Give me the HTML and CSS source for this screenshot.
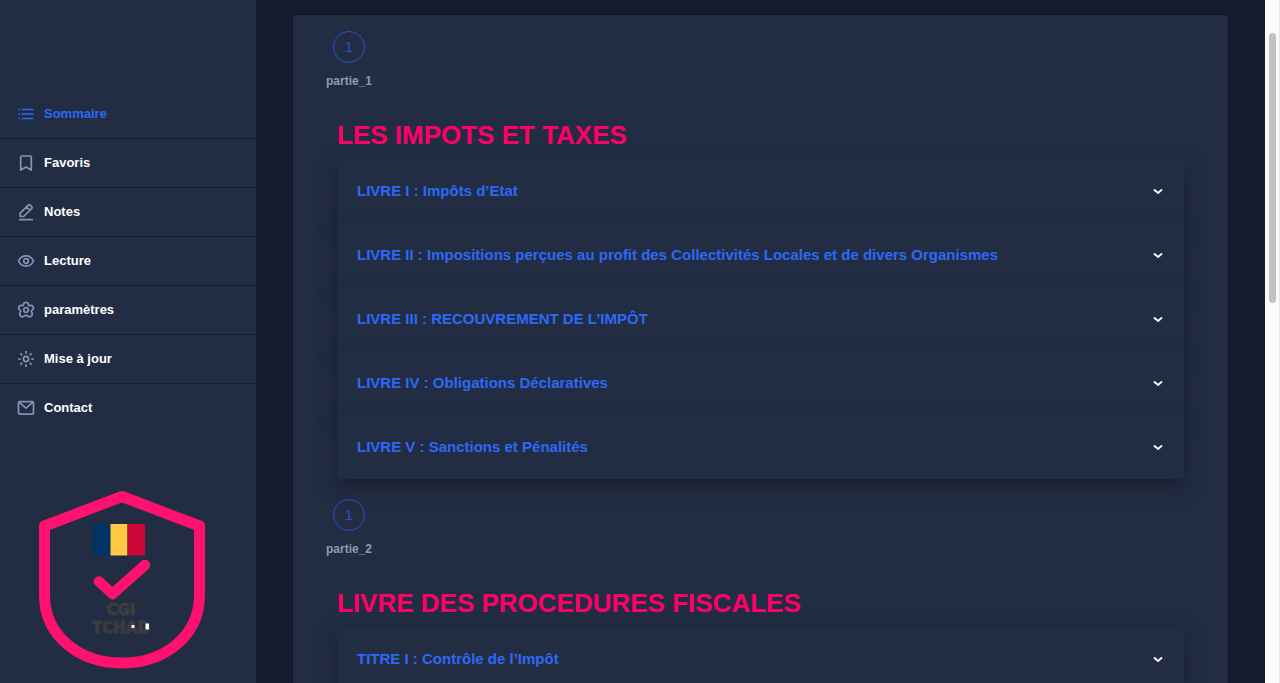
FILE: index.html
```html
<!DOCTYPE html>
<html lang="fr">
<head>
<meta charset="utf-8">
<meta name="viewport" content="width=device-width, initial-scale=1">
<title>CGI Tchad</title>
<link rel="stylesheet" href="styles.css">
</head>
<body>
<div class="layout">
  <aside class="sidebar">
    <nav class="menu">
      <a class="menu-item active" href="#sommaire">
        <svg class="icon" viewBox="0 0 20 20"><path d="M5.500 5.500H17.500M5.500 10H17.500M5.500 14.500H17.500M2.200 5.500h1.600M2.200 10h1.600M2.200 14.500h1.600"/></svg>
        <span>Sommaire</span></a>
      <a class="menu-item" href="#favoris">
        <svg class="icon" viewBox="0 0 20 20"><path d="M4.700 17V4a1 1 0 0 1 1-1h8.600a1 1 0 0 1 1 1v13L10 13.900z"/></svg>
        <span>Favoris</span></a>
      <a class="menu-item" href="#notes">
        <svg class="icon" viewBox="0 0 20 20"><path d="M3 17.600h14M4.200 14.500v-3.300l8.300-8.300a1 1 0 0 1 1.400 0l2 2a1 1 0 0 1 0 1.400l-8.300 8.200zM10.500 5l3.300 3.300"/></svg>
        <span>Notes</span></a>
      <a class="menu-item" href="#lecture">
        <svg class="icon" viewBox="0 0 20 20"><path d="M2.500 10C4.100 6.500 6.500 4.900 10 4.900s5.900 1.600 7.500 5.100c-1.600 3.500-4 5.100-7.500 5.100S4.100 13.500 2.500 10z"/><circle cx="10" cy="10" r="2.300"/></svg>
        <span>Lecture</span></a>
      <a class="menu-item" href="#parametres">
        <svg class="icon" viewBox="0 0 20 20"><path d="M7.500 4.400c.2-1.500.9-2 2.500-2s2.300.5 2.500 2c.1 1 .7 1.500 1.600 1.200 1.500-.5 2.400-.1 3 1.200.7 1.500.4 2.600-1 3.300-.8.500-.9 1.200-.4 2 .9 1.400.9 2.800-.2 3.800-1.300 1.200-2.500 1.300-3.500.3-.8-.8-.9-.9-2-.9s-1.200.1-2 .9c-1 1-2.200.9-3.500-.3-1.100-1-1.100-2.400-.2-3.800.5-.8.400-1.500-.4-2-1.400-.7-1.700-1.800-1-3.300.6-1.300 1.500-1.700 3-1.200.9.300 1.500-.2 1.600-1.200z"/><circle cx="10" cy="10" r="2.300"/></svg>
        <span>paramètres</span></a>
      <a class="menu-item" href="#maj">
        <svg class="icon" viewBox="0 0 20 20"><circle cx="10" cy="10" r="2.600"/><path d="M10 2v2.800M10 15.200V18M2 10h2.800M15.200 10H18M4.400 4.400l1.800 1.800M13.800 13.800l1.800 1.800M4.400 15.600l1.800-1.800M13.800 6.200l1.800-1.800"/></svg>
        <span>Mise à jour</span></a>
      <a class="menu-item" href="#contact">
        <svg class="icon" viewBox="0 0 20 20"><rect x="2.500" y="3.700" width="15" height="12.400" rx="1.200"/><path d="M3 4.200l7 6 7-6"/></svg>
        <span>Contact</span></a>
    </nav>
    <svg class="logo" viewBox="0 0 168 180" role="img" aria-label="CGI Tchad">
      <path d="M84 6.500L6.500 36v69c0 41 35 68 77.500 68s77.500-27 77.500-68V36z" fill="none" stroke="#ff1170" stroke-width="11" stroke-linejoin="round"/>
      <path fill="#003366" d="M55 34h17.500v31.500H55z"/>
      <path fill="#ffc944" d="M72.500 34h17v31.500h-17z"/>
      <path fill="#cc0637" d="M89.500 34h17.500v31.500H89.500z"/>
      <path d="M61 91.500L74.500 104 107 75" fill="none" stroke="#ff1170" stroke-width="10.500" stroke-linecap="round" stroke-linejoin="round"/>
      <g class="logo-text"><text x="83" y="125">CGI</text><text x="83" y="143">TCHAD</text></g>
      <path fill="#fff" d="M93.500 135h3v3h-3zM107.500 133.500h3.500v6h-3.500z"/>
    </svg>
  </aside>

  <main class="content">
    <div class="card">
      <section class="part">
        <div class="step"><span class="step-number">1</span><span class="step-label">partie_1</span></div>
        <div class="part-body">
          <h1 class="part-title">LES IMPOTS ET TAXES</h1>
          <button class="book" type="button"><span>LIVRE I : Impôts d’Etat</span><svg class="chevron" viewBox="0 0 12 12"><path d="M2 4.500L6 8l4-3.500"/></svg></button>
          <button class="book" type="button"><span>LIVRE II : Impositions perçues au profit des Collectivités Locales et de divers Organismes</span><svg class="chevron" viewBox="0 0 12 12"><path d="M2 4.500L6 8l4-3.500"/></svg></button>
          <button class="book" type="button"><span>LIVRE III : RECOUVREMENT DE L’IMPÔT</span><svg class="chevron" viewBox="0 0 12 12"><path d="M2 4.500L6 8l4-3.500"/></svg></button>
          <button class="book" type="button"><span>LIVRE IV : Obligations Déclaratives</span><svg class="chevron" viewBox="0 0 12 12"><path d="M2 4.500L6 8l4-3.500"/></svg></button>
          <button class="book" type="button"><span>LIVRE V : Sanctions et Pénalités</span><svg class="chevron" viewBox="0 0 12 12"><path d="M2 4.500L6 8l4-3.500"/></svg></button>
        </div>
      </section>
      <section class="part">
        <div class="step"><span class="step-number">1</span><span class="step-label">partie_2</span></div>
        <div class="part-body">
          <h1 class="part-title">LIVRE DES PROCEDURES FISCALES</h1>
          <button class="book" type="button"><span>TITRE I : Contrôle de l’Impôt</span><svg class="chevron" viewBox="0 0 12 12"><path d="M2 4.500L6 8l4-3.500"/></svg></button>
        </div>
      </section>
    </div>
  </main>

  <div class="scroll-track"><div class="scroll-thumb"></div></div>
</div>
</body>
</html>
```

FILE: styles.css
```css
* { box-sizing: border-box; }

body {
  margin: 0;
  background: #161b2d;
  color: #fff;
  font-family: "Liberation Sans", Arial, sans-serif;
}

.layout {
  display: flex;
  height: 100vh;
  overflow: hidden;
}

.sidebar {
  flex: 0 0 256px;
  display: flex;
  flex-direction: column;
  padding-top: 90px;
  background: #222d43;
}

.menu-item {
  display: flex;
  align-items: center;
  gap: 8px;
  height: 49px;
  padding: 0 16px;
  border-bottom: 1px solid #161b2d;
  color: #fff;
  font-size: 13px;
  font-weight: 700;
  line-height: 16px;
  text-decoration: none;
}

.menu-item:last-child { border-bottom-color: transparent; }
.menu-item.active { color: #2d69f5; }

.icon {
  width: 20px;
  height: 20px;
  fill: none;
  stroke: #8494b2;
  stroke-width: 1.7;
  stroke-linejoin: round;
}

.active .icon { stroke: #2d69f5; }

.logo {
  flex: none;
  width: 168px;
  height: 180px;
  margin: 57px 0 0 38px;
}

.logo-text {
  fill: #3c3c3e;
  stroke: #3c3c3e;
  stroke-width: 1.2;
  font-family: "DejaVu Sans", sans-serif;
  font-size: 15px;
  font-weight: 700;
  text-anchor: middle;
}

.content {
  flex: 1;
  min-width: 0;
  padding: 14px 36px 0;
}

.card {
  min-height: 100vh;
  padding: 16px 0;
  border: 1px solid #111524;
  border-radius: 4px;
  background: #222d43;
}

.part { margin-bottom: 20px; }

.step {
  display: inline-flex;
  flex-direction: column;
  align-items: center;
  gap: 10px;
  margin-left: 33px;
  vertical-align: top;
}

.step-number {
  display: grid;
  place-items: center;
  width: 32px;
  height: 32px;
  border: 1px solid #2850cc;
  border-radius: 50%;
  color: #2850cc;
  font-size: 14px;
}

.step-label {
  color: #8e9bb5;
  font-size: 12px;
  font-weight: 700;
  line-height: 16px;
}

.part-body { padding: 30px 44px 0; }

.part-title {
  margin: 0 0 8px;
  color: #ff0066;
  font-size: 26px;
  line-height: 32px;
}

.book {
  display: flex;
  align-items: center;
  justify-content: space-between;
  width: 100%;
  min-height: 64px;
  padding: 0 20px;
  border: 0;
  border-radius: 4px;
  background: #222d43;
  box-shadow: 0 8px 20px -1px rgba(22, 25, 42, 0.8);
  color: #2d69f5;
  font-family: inherit;
  font-size: 15px;
  font-weight: 700;
  line-height: 20px;
  text-align: left;
}

.chevron {
  flex: none;
  width: 12px;
  height: 12px;
  fill: none;
  stroke: #fff;
  stroke-width: 1.8;
  stroke-linejoin: round;
}

.scroll-track {
  flex: 0 0 15px;
  padding: 33px 3px 0 4px;
  background: #fafafa;
  border-right: 1px solid #e8e8e8;
}

.scroll-thumb {
  height: 270px;
  border-radius: 4px;
  background: #c1c1c1;
}
```
